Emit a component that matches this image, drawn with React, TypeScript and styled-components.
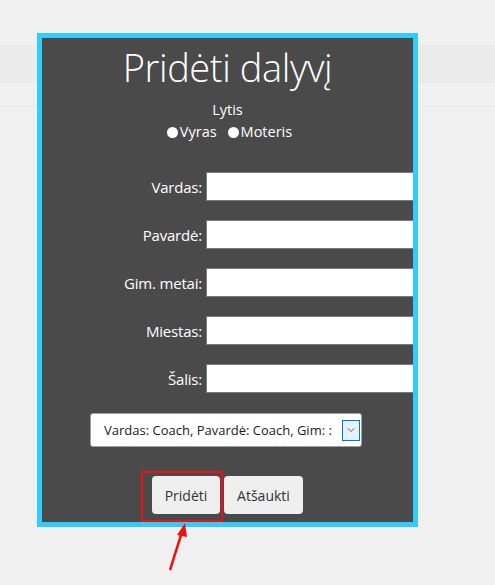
import React from "react";
import styled, { createGlobalStyle } from "styled-components";
import { ChevronDown } from "lucide-react";

const GlobalStyle = createGlobalStyle`
  html, body {
    margin: 0;
    padding: 0;
  }
  body {
    background: #f0f0f0;
    font-family: "Open Sans", "Noto Sans", sans-serif;
  }
`;

const Page = styled.div`
  position: relative;
  width: 495px;
  height: 585px;
  overflow: hidden;
  padding-top: 33px;
  box-sizing: border-box;
  background: linear-gradient(
    to bottom,
    #f0f0f0 0px,
    #f0f0f0 45px,
    #ebebeb 45px,
    #ebebeb 83px,
    #f0f0f0 83px,
    #f0f0f0 106px,
    #e9e9e9 106px,
    #e9e9e9 107px,
    #f0f0f0 107px
  );
`;

const Card = styled.div`
  margin-left: 37px;
  width: 381px;
  height: 494px;
  box-sizing: border-box;
  border: 5px solid #33ccff;
  background: #4a4a4a;
  overflow: hidden;
  color: #ffffff;
  display: flex;
  flex-direction: column;
  align-items: center;
`;

const Title = styled.h1`
  margin: 4px 0 0;
  font-size: 38px;
  font-weight: 300;
  line-height: 50px;
  letter-spacing: -0.4px;
`;

const GenderLabel = styled.div`
  margin-top: 8px;
  font-size: 14.5px;
  line-height: 20px;
`;

const RadioRow = styled.div`
  display: flex;
  gap: 11px;
  font-size: 14.5px;
  line-height: 20px;
  margin-top: 2px;
  margin-left: 4px;
`;

const RadioOption = styled.label`
  display: flex;
  align-items: center;
  gap: 2px;
`;

const RadioDot = styled.span`
  width: 11px;
  height: 11px;
  border-radius: 50%;
  background: #ffffff;
`;

const Fields = styled.div`
  align-self: stretch;
  margin-top: 30px;
  display: flex;
  flex-direction: column;
  gap: 19px;
`;

const FieldRow = styled.div`
  display: grid;
  grid-template-columns: 160px 230px;
  column-gap: 4px;
  align-items: center;
`;

const FieldLabel = styled.span`
  text-align: right;
  font-size: 15px;
  letter-spacing: -0.2px;
`;

const TextInput = styled.input`
  height: 29px;
  box-sizing: border-box;
  border: 1px solid #7a7a7a;
  background: #ffffff;
  margin: 0;
  padding: 0 4px;
`;

const SelectBox = styled.div`
  margin-top: 20px;
  margin-left: -3px;
  width: 272px;
  height: 34px;
  box-sizing: border-box;
  border: 1px solid #a0a0a0;
  border-radius: 3px;
  background: #ffffff;
  color: #1b1b1b;
  display: flex;
  align-items: center;
  padding: 0 1px 0 13px;
  font-size: 13px;
`;

const SelectText = styled.span`
  flex: 1;
  white-space: nowrap;
  overflow: hidden;
`;

const SelectArrow = styled.span`
  flex: none;
  width: 18px;
  height: 21px;
  box-sizing: border-box;
  border: 1px solid #0078d7;
  background: #e5f1fb;
  display: flex;
  align-items: center;
  justify-content: center;
  color: #333;
`;

const ButtonRow = styled.div`
  margin-top: 29px;
  display: flex;
  gap: 4px;
`;

const Button = styled.button<{ $width: number }>`
  width: ${(p) => p.$width}px;
  height: 38px;
  border: none;
  border-radius: 4px;
  background: #efefef;
  color: #333333;
  font-family: "Open Sans", "Noto Sans", sans-serif;
  font-size: 14px;
  padding: 0;
`;

const Highlight = styled.div`
  position: absolute;
  left: 141px;
  top: 471px;
  width: 82px;
  height: 51px;
  box-sizing: border-box;
  border: 2px solid #ee1111;
`;

const Arrow = styled.svg`
  position: absolute;
  left: 160px;
  top: 520px;
`;

const fields = ["Vardas:", "Pavardė:", "Gim. metai:", "Miestas:", "Šalis:"];

export default function App() {
  return (
    <>
      <GlobalStyle />
      <Page>
        <Card>
          <Title>Pridėti dalyvį</Title>
          <GenderLabel>Lytis</GenderLabel>
          <RadioRow>
            <RadioOption>
              <RadioDot />
              Vyras
            </RadioOption>
            <RadioOption>
              <RadioDot />
              Moteris
            </RadioOption>
          </RadioRow>
          <Fields>
            {fields.map((f) => (
              <FieldRow key={f}>
                <FieldLabel>{f}</FieldLabel>
                <TextInput type="text" />
              </FieldRow>
            ))}
          </Fields>
          <SelectBox>
            <SelectText>Vardas: Coach, Pavardė: Coach, Gim: :</SelectText>
            <SelectArrow>
              <ChevronDown size={12} strokeWidth={1.5} />
            </SelectArrow>
          </SelectBox>
          <ButtonRow>
            <Button $width={68}>Pridėti</Button>
            <Button $width={79}>Atšaukti</Button>
          </ButtonRow>
        </Card>
        <Highlight />
        <Arrow width="40" height="60" viewBox="0 0 40 60">
          <line x1="10" y1="50" x2="22" y2="12" stroke="#ee1111" strokeWidth="2.5" />
          <polygon points="25,3 17,15 27,17" fill="#ee1111" />
        </Arrow>
      </Page>
    </>
  );
}
